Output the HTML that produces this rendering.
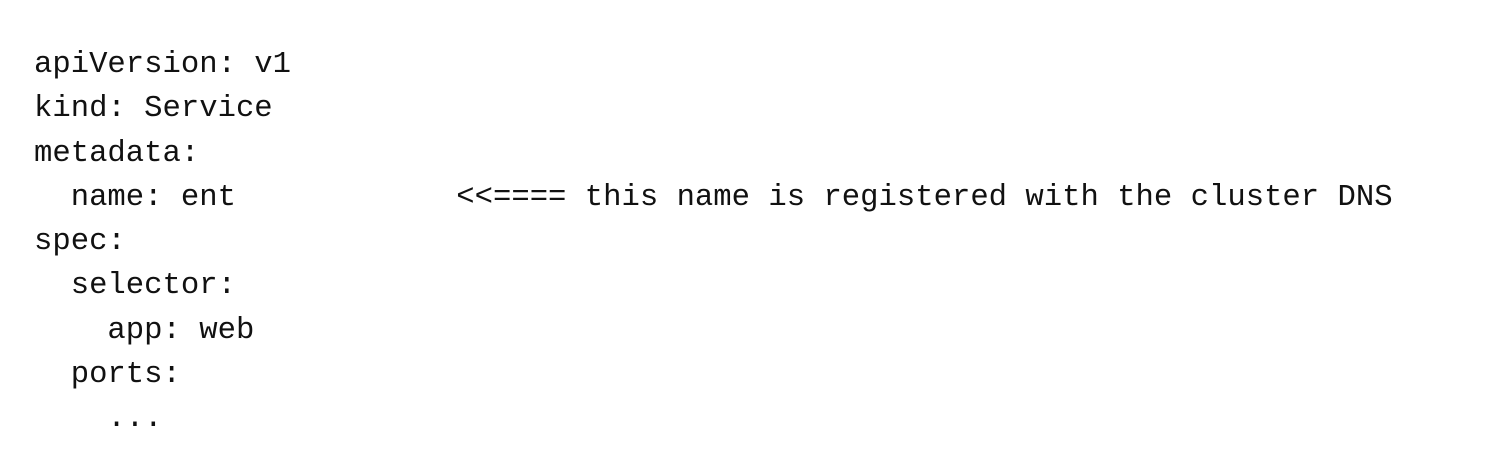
<!DOCTYPE html>
<html><head><meta charset="utf-8"><style>
html,body{margin:0;padding:0;background:#fff;width:1488px;height:468px;overflow:hidden}
pre{position:absolute;left:34px;top:43px;margin:0;font-family:"Liberation Mono","DejaVu Sans Mono",monospace;font-size:30.6px;line-height:44.25px;color:#111;}
</style></head><body>
<pre>apiVersion: v1
kind: Service
metadata:
  name: ent            &lt;&lt;==== this name is registered with the cluster DNS
spec:
  selector:
    app: web
  ports:
    ...</pre>
</body></html>
